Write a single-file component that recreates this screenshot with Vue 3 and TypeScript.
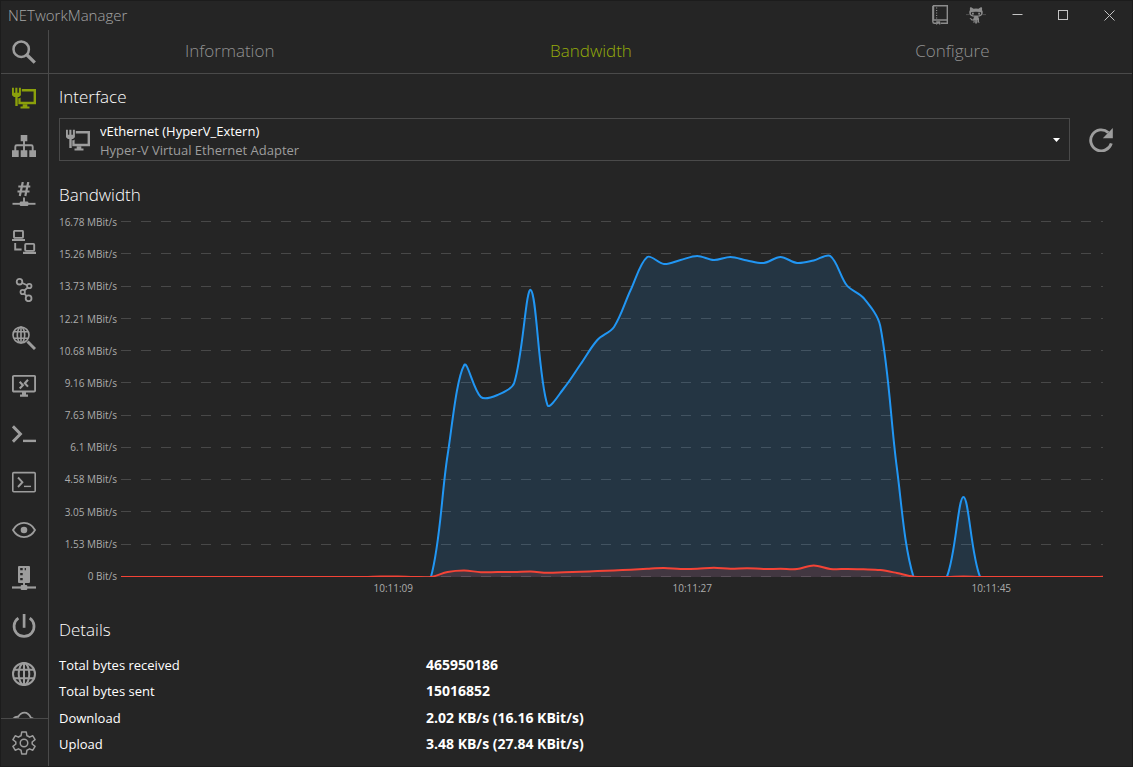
<script setup lang="ts">
import { ref } from 'vue'

interface NavItem {
  id: string
  label: string
}

const navItems: NavItem[] = [
  { id: 'interface', label: 'Network Interface' },
  { id: 'ipscan', label: 'IP Scanner' },
  { id: 'portscan', label: 'Port Scanner' },
  { id: 'ping', label: 'Ping Monitor' },
  { id: 'trace', label: 'Traceroute' },
  { id: 'dns', label: 'DNS Lookup' },
  { id: 'rdp', label: 'Remote Desktop' },
  { id: 'powershell', label: 'PowerShell' },
  { id: 'putty', label: 'PuTTY' },
  { id: 'vnc', label: 'TigerVNC' },
  { id: 'snmp', label: 'SNMP' },
  { id: 'wol', label: 'Wake on LAN' },
  { id: 'whois', label: 'Whois' },
  { id: 'http', label: 'HTTP Headers' },
]
const activeNav = ref('interface')

const tabs = ['Information', 'Bandwidth', 'Configure']
const activeTab = ref('Bandwidth')

const yLabels = [
  '16.78 MBit/s', '15.26 MBit/s', '13.73 MBit/s', '12.21 MBit/s', '10.68 MBit/s', '9.16 MBit/s',
  '7.63 MBit/s', '6.1 MBit/s', '4.58 MBit/s', '3.05 MBit/s', '1.53 MBit/s', '0 Bit/s',
]
const xLabels = ['10:11:09', '10:11:27', '10:11:45']

const details = [
  { label: 'Total bytes received', value: '465950186' },
  { label: 'Total bytes sent', value: '15016852' },
  { label: 'Download', value: '2.02 KB/s (16.16 KBit/s)' },
  { label: 'Upload', value: '3.48 KB/s (27.84 KBit/s)' },
]

const plotWidth = 982
const plotHeight = 356
const sampleStep = 16.64
const firstSampleX = -6.2

const idle = (count: number, level: number): number[] => Array.from({ length: count }, () => level)

const download = [
  ...idle(20, 0),
  122, 212, 180, 182, 194, 287, 172, 189, 213, 237, 250, 287, 320, 313, 317, 321, 317, 320, 316.5,
  314, 320, 314, 316.5, 321, 291.5, 279, 251, 109, 0, 0, 0, 80, 0,
  ...idle(8, 0),
]
const upload = [
  ...idle(16, 0), 0.5, 0.5, 0.1, 0.1,
  5, 6.5, 4.8, 5, 4.9, 5.4, 4.3, 4.8, 5.3, 5.9, 6.5, 7.3, 8.3, 9, 8, 8.2, 9.2, 8.2, 8.8, 8,
  8.2, 8, 11.5, 8.1, 8, 7.7, 7, 4, 0.3, 0, 0, 0.6, 0.1,
  ...idle(7, 0), 0.8,
]

type Point = [number, number]

// Joins the samples with Bezier segments whose handles follow the neighbouring segment lengths.
function smoothPath(levels: number[]): string {
  const pts: Point[] = levels.map((v, i) => [firstSampleX + i * sampleStep, plotHeight - v])
  const smoothness = 0.65
  let d = `M${pts[0][0]} ${pts[0][1]}`
  for (let i = 0; i < pts.length - 1; i++) {
    const p0 = pts[Math.max(i - 1, 0)]
    const p1 = pts[i]
    const p2 = pts[i + 1]
    const p3 = pts[Math.min(i + 2, pts.length - 1)]
    const mid = (a: Point, b: Point): Point => [(a[0] + b[0]) / 2, (a[1] + b[1]) / 2]
    const len = (a: Point, b: Point): number => Math.hypot(b[0] - a[0], b[1] - a[1])
    const c1 = mid(p0, p1)
    const c2 = mid(p1, p2)
    const c3 = mid(p2, p3)
    const k1 = len(p0, p1) / (len(p0, p1) + len(p1, p2))
    const k2 = len(p1, p2) / (len(p1, p2) + len(p2, p3))
    const handle = (axis: 0 | 1): [number, number] => {
      const m1 = c1[axis] + (c2[axis] - c1[axis]) * k1
      const m2 = c2[axis] + (c3[axis] - c2[axis]) * k2
      return [
        (c2[axis] - m1) * smoothness + p1[axis],
        (c2[axis] - m2) * smoothness + p2[axis],
      ]
    }
    const [x1, x2] = handle(0)
    const [y1, y2] = handle(1)
    d += ` C${x1.toFixed(2)} ${y1.toFixed(2)} ${x2.toFixed(2)} ${y2.toFixed(2)} ${p2[0].toFixed(2)} ${p2[1]}`
  }
  return d
}

const closeArea = (line: string, count: number): string =>
  `${line} L${firstSampleX + (count - 1) * sampleStep} ${plotHeight} L${firstSampleX} ${plotHeight} Z`

const downloadLine = smoothPath(download)
const uploadLine = smoothPath(upload)
const downloadArea = closeArea(downloadLine, download.length)
const uploadArea = closeArea(uploadLine, upload.length)
const gridLines = yLabels.map((_, i) => 0.5 + (i * (plotHeight - 1)) / (yLabels.length - 1))
</script>

<template>
  <div class="window">
    <header class="titlebar">
      <h1 class="app-title">NETworkManager</h1>
      <button class="title-tool" type="button" aria-label="Documentation">
        <svg width="16" height="20" viewBox="0 0 16 20">
          <path d="M1.500 .7H15.300V15H1.500zM.8 1V16.500Q.8 18.300 2.500 18.300H4.500M8.500 18.300H15.300V15" fill="none" stroke="currentColor" stroke-width="1.400" />
          <path d="M4 3h1.200M4 5.500h1.200M4 8h1.200M4 10.500h1.200M4 13h1.200" stroke="currentColor" stroke-width="1.200" />
          <path d="M4.200 16.200h4v3.700l-2-1.300-2 1.300z" fill="currentColor" />
        </svg>
      </button>
      <button class="title-tool" type="button" aria-label="GitHub">
        <svg width="20" height="17" viewBox="0 0 20 17">
          <path fill-rule="evenodd" d="M4.200 .3C5.500 .3 6.600 1 7.500 1.700Q10 1.200 12.500 1.700C13.400 1 14.500 .3 15.800 .3Q16.400 1.700 16 3Q17 4.300 16.700 6.200C16.400 8.600 14.500 9.500 11.700 9.700Q13 10.300 13 11.600V14.400Q13 15.200 14 15.700L11.400 15.600V13H10.900V16.600H9.200V13H8.700V15.600L6.800 15.700Q7.600 15.200 7.600 14.400V13.500C5.600 13.900 5 13 4.600 12.200Q4.200 11.400 3.400 11.100C4.500 10.700 5.300 11.300 5.800 12Q6.500 12.700 7.300 12.300Q7.300 10.300 8.500 9.700C5.500 9.500 3.600 8.600 3.300 6.200Q3 4.300 4 3Q3.600 1.700 4.200 .3zM5.800 5Q4.700 5.200 4.800 6.600Q5 8.300 7.500 8.500H12.500Q15 8.300 15.200 6.600Q15.300 5.200 14.200 5Q10 4.600 5.800 5z" fill="currentColor" />
          <rect x="6" y="5.600" width="1.800" height="2.200" rx=".8" fill="currentColor" />
          <rect x="12.200" y="5.600" width="1.800" height="2.200" rx=".8" fill="currentColor" />
          <path d="M0 7.600H3.500M16.500 7.600H20" stroke="currentColor" stroke-width=".4" />
        </svg>
      </button>
      <button class="window-button" type="button" aria-label="Minimize">
        <svg width="11" height="11" viewBox="0 0 11 11"><path d="M.5 4.500h10" stroke="currentColor" /></svg>
      </button>
      <button class="window-button" type="button" aria-label="Maximize">
        <svg width="11" height="11" viewBox="0 0 11 11"><rect x=".5" y=".5" width="9" height="9" fill="none" stroke="currentColor" /></svg>
      </button>
      <button class="window-button" type="button" aria-label="Close">
        <svg width="11" height="11" viewBox="0 0 11 11"><path d="M.5 .5l10 10M10.500 .5l-10 10" stroke="currentColor" /></svg>
      </button>
    </header>

    <div class="topbar">
      <button class="search" type="button" aria-label="Search">
        <svg class="icon" viewBox="0 0 24 24">
          <circle cx="9.200" cy="9.200" r="7.700" fill="none" stroke="currentColor" stroke-width="2.500" />
          <path d="M15 15l7.800 7.600" stroke="currentColor" stroke-width="3.300" />
        </svg>
      </button>
      <nav class="tabs" aria-label="Views">
        <button
          v-for="tab in tabs"
          :key="tab"
          type="button"
          class="tab"
          :class="{ active: tab === activeTab }"
          @click="activeTab = tab"
        >{{ tab }}</button>
      </nav>
    </div>

    <div class="body">
      <aside class="sidebar">
        <nav class="nav" aria-label="Tools">
          <button
            v-for="item in navItems"
            :key="item.id"
            type="button"
            class="nav-item"
            :class="{ active: item.id === activeNav }"
            :aria-label="item.label"
            @click="activeNav = item.id"
          >
            <svg class="icon" viewBox="0 0 24 24" fill="none" stroke="currentColor">
              <g v-if="item.id === 'interface'" fill="currentColor" stroke="none">
                <path d="M0 1.700h1.900v5h1.400v-5h2.100v5h1.500v-5h2v7.500L7 11H5.700v9H3.300v-9H2L0 9.200z" />
                <path d="M9.800 3H24v15.200H6.300V12.300h1.300l1-.8v4.200h13V5.400H9.800z" />
                <path d="M10.700 18.200h4.600v2.200h2.200v2.200H8.500v-2.200h2.200z" />
              </g>
              <g v-else-if="item.id === 'ipscan'">
                <path d="M8.700 1h6.600v6.300H8.700zM0 16.300h6.700V23H0zM8.700 16.300h6.600V23H8.700zM17.300 16.300H24V23h-6.700z" fill="currentColor" stroke="none" />
                <path d="M12 7v10M3.300 17v-4.200q0-1.500 1.500-1.500h14.400q1.500 0 1.500 1.500V17" stroke-width="1.900" />
              </g>
              <g v-else-if="item.id === 'portscan'">
                <path d="M10.800 0L7.800 14M16.300 0l-3 14M6.300 4.500h12M5.500 9.500h12" stroke-width="2.200" />
                <path d="M.5 21.800h23" stroke-width="1.900" />
                <path d="M12 15.500v5" stroke-width="1.900" />
                <rect x="7.700" y="19.600" width="8.700" height="4.400" rx="1.200" fill="currentColor" stroke="none" />
              </g>
              <g v-else-if="item.id === 'ping'">
                <rect x="2" y=".9" width="9" height="7" rx=".8" stroke-width="1.900" />
                <path d="M0 10h13M11 22.800h13" stroke-width="2.200" />
                <rect x="13.200" y="13.900" width="9" height="7" rx=".8" stroke-width="1.900" />
                <path d="M3.200 13v6.500h6.400" stroke-width="1.900" />
              </g>
              <g v-else-if="item.id === 'trace'" stroke-width="1.800">
                <circle cx="7.500" cy="3.700" r="2.800" />
                <circle cx="17.300" cy="8" r="2.200" />
                <circle cx="10.700" cy="14" r="2.200" />
                <circle cx="16.600" cy="20.300" r="2.900" />
                <path d="M10.200 5l5 2.200M15.700 9.600l-3.400 2.900M12.300 15.700l2.300 2.400" />
              </g>
              <g v-else-if="item.id === 'dns'" stroke-width="1.600">
                <circle cx="9" cy="9" r="8" />
                <ellipse cx="9" cy="9" rx="3.700" ry="8" />
                <path d="M9 1v16M1.800 5.700h14.400M1.800 12.300h14.400" />
                <path d="M15.500 15.500l7.500 7.500" stroke-width="3" />
              </g>
              <g v-else-if="item.id === 'rdp'">
                <rect x=".9" y="1.900" width="22.200" height="15.600" rx="1" stroke-width="1.900" />
                <path d="M10 18h4v2.500h2v2.200H8v-2.200h2z" fill="currentColor" stroke="none" />
                <path d="M7.700 7.700l3.200 3.500-3.200 3.300M16 5.800L12.800 9.200l3.200 3.400" stroke-width="2.100" />
              </g>
              <g v-else-if="item.id === 'powershell'">
                <path d="M.9 4.300L8.400 12 .9 19.700" stroke-width="3" />
                <path d="M11 18.900h13" stroke-width="2.400" />
              </g>
              <g v-else-if="item.id === 'putty'">
                <rect x=".8" y="2.600" width="22.400" height="19.200" rx="1" stroke-width="1.600" />
                <path d="M6 7.500l4.400 4.700L6 17" stroke-width="1.900" />
                <path d="M12 16.400h7" stroke-width="1.400" />
              </g>
              <g v-else-if="item.id === 'vnc'">
                <path d="M1 12C3.500 7.500 7.500 4.900 12 4.900S20.500 7.500 23 12C20.500 16.500 16.500 19.100 12 19.100S3.500 16.500 1 12z" stroke-width="1.800" />
                <circle cx="12" cy="12" r="3.300" fill="currentColor" stroke="none" />
              </g>
              <g v-else-if="item.id === 'snmp'">
                <path fill-rule="evenodd" d="M7 0h10q1 0 1 1v15q0 1-1 1H7q-1 0-1-1V1q0-1 1-1zM8.200 2v2.200h2.500V2zM12.700 2v2.200h1.200V2zM8.200 7v2.200h2.500V7zM8.200 12v2.200h2.500V12z" fill="currentColor" stroke="none" />
                <path d="M12 17v3" stroke-width="1.900" />
                <path d="M0 21.500h24" stroke-width="2.200" />
                <rect x="8.700" y="19" width="6.600" height="5" rx="1" fill="currentColor" stroke="none" />
              </g>
              <g v-else-if="item.id === 'wol'" stroke-width="2.700">
                <path d="M12.100 0v13.800" />
                <path d="M6.400 4.200a10 10 0 1 0 11.300 0" />
              </g>
              <g v-else-if="item.id === 'whois'" stroke-width="2">
                <circle cx="12" cy="12" r="11" />
                <ellipse cx="12" cy="12" rx="5.300" ry="11" />
                <path d="M12 1v22M1.900 7.800h20.200M1.900 16.200h20.200" />
              </g>
              <g v-else stroke-width="1.800">
                <path d="M1 9q2-2.500 5.200-2.200Q8.500 2.600 12.500 2.600T19 8q4 .5 4 5t-4.500 4.500h-13Q1 17.500 1 13.500V9" />
              </g>
            </svg>
          </button>
        </nav>
        <button class="settings" type="button" aria-label="Settings">
          <svg class="icon" viewBox="1.500 1.500 21 21" fill="none" stroke="currentColor" stroke-width="1.300">
            <path d="M10 21.600L9.400 18.300Q8.300 17.900 7.200 17.100L4.300 18.300L2.300 14.900L4.900 12.900Q4.700 12 4.900 11.100L2.300 9.100L4.300 5.700L7.200 6.900Q8.300 6.100 9.400 5.700L10 2.400H14L14.600 5.700Q15.700 6.100 16.800 6.900L19.700 5.700L21.700 9.100L19.100 11.100Q19.300 12 19.100 12.900L21.700 14.900L19.700 18.300L16.800 17.100Q15.700 17.900 14.600 18.300L14 21.600z" stroke-linejoin="round" />
            <circle cx="12" cy="12" r="3.300" />
          </svg>
        </button>
      </aside>

      <main class="content">
        <h2 class="heading"><label for="adapter">Interface</label></h2>
        <div class="adapter-row">
          <div class="adapter">
            <select id="adapter" class="adapter-select">
              <option>vEthernet (HyperV_Extern)</option>
            </select>
            <svg class="icon adapter-icon" viewBox="0 0 24 24" fill="currentColor">
              <path d="M0 1.700h1.900v5h1.400v-5h2.100v5h1.500v-5h2v7.500L7 11H5.700v9H3.300v-9H2L0 9.200z" />
              <path d="M9.800 3H24v15.200H6.300V12.300h1.300l1-.8v4.200h13V5.400H9.800z" />
              <path d="M10.700 18.200h4.600v2.200h2.200v2.200H8.500v-2.200h2.200z" />
            </svg>
            <span class="adapter-description">Hyper-V Virtual Ethernet Adapter</span>
            <svg class="adapter-arrow" width="7" height="4" viewBox="0 0 7 4"><path d="M0 0h7L3.500 4z" fill="currentColor" /></svg>
          </div>
          <button class="refresh" type="button" aria-label="Refresh">
            <svg class="icon" viewBox="0 0 24 24">
              <path d="M22.300 15.300A10.500 10.500 0 1 1 19.300 4.600" fill="none" stroke="currentColor" stroke-width="2.900" />
              <path d="M23.800 0V10.300H13.800z" fill="currentColor" />
            </svg>
          </button>
        </div>

        <h2 class="heading chart-heading">Bandwidth</h2>
        <div class="chart">
          <div class="y-axis">
            <span v-for="label in yLabels" :key="label">{{ label }}</span>
          </div>
          <div class="plot">
            <svg class="plot-svg" :viewBox="`0 0 ${plotWidth} ${plotHeight}`" preserveAspectRatio="none" role="img" aria-label="Bandwidth over time">
              <line v-for="y in gridLines" :key="y" class="grid-line" x1="0" :x2="plotWidth" :y1="y" :y2="y" />
              <path class="area download" :d="downloadArea" />
              <path class="line download" :d="downloadLine" />
              <path class="area upload" :d="uploadArea" />
              <path class="line upload" :d="uploadLine" />
            </svg>
          </div>
          <div class="x-axis">
            <span v-for="label in xLabels" :key="label">{{ label }}</span>
          </div>
        </div>

        <h2 class="heading details-heading">Details</h2>
        <table class="details">
          <tbody>
            <tr v-for="row in details" :key="row.label">
              <th scope="row">{{ row.label }}</th>
              <td>{{ row.value }}</td>
            </tr>
          </tbody>
        </table>
      </main>
    </div>
  </div>
</template>

<style>
body {
  margin: 0;
  background: #252525;
}
</style>

<style scoped>
.window {
  --line: #4a4a4a;
  --muted: #9d9d9d;
  --accent: #8ba00b;
  display: flex;
  flex-direction: column;
  box-sizing: border-box;
  height: 100vh;
  min-height: 640px;
  background: #252525;
  color: #fff;
  outline: 1px solid #1c1c1c;
  outline-offset: -1px;
  font-family: "Open Sans", "Noto Sans", sans-serif;
  font-size: 13px;
}

button {
  display: flex;
  align-items: center;
  justify-content: center;
  margin: 0;
  padding: 0;
  border: 0;
  background: none;
  color: var(--muted);
  font: inherit;
}

.icon {
  display: block;
  width: 24px;
  height: 24px;
}

.titlebar {
  display: flex;
  height: 30px;
  padding: 0 1px 0 8px;
}

.app-title {
  flex: 1;
  margin: 0;
  color: #a6a6a6;
  font-size: 15px;
  font-weight: 300;
  line-height: 30px;
}

.title-tool {
  width: 36px;
  color: #8c8c8c;
}

.window-button {
  width: 46px;
  color: #c4c4c4;
}

.topbar {
  display: flex;
  height: 43px;
  border-bottom: 1px solid var(--line);
}

.search {
  width: 48px;
  border-right: 1px solid var(--line);
  box-sizing: content-box;
}

.tabs {
  display: grid;
  flex: 1;
  grid-template-columns: repeat(3, 1fr);
}

.tab {
  padding-bottom: 2px;
  color: #929292;
  font-size: 17px;
  font-weight: 300;
}

.tab.active {
  color: #95ac0a;
}

.body {
  display: flex;
  flex: 1;
  min-height: 0;
}

.sidebar {
  display: flex;
  flex-direction: column;
  width: 48px;
  border-right: 1px solid var(--line);
}

.nav {
  flex: 1;
  min-height: 0;
  overflow: hidden;
}

.nav-item {
  width: 48px;
  height: 48px;
}

.nav-item.active {
  color: var(--accent);
}

.settings {
  height: 48px;
  border-top: 1px solid var(--line);
  box-sizing: content-box;
}

.content {
  display: flex;
  flex: 1;
  flex-direction: column;
  min-width: 0;
  padding: 11px 20px 10px 10px;
}

.heading {
  margin: 0;
  font-size: 17px;
  font-weight: 300;
  line-height: 24px;
}

.adapter-row {
  display: flex;
  align-items: center;
  gap: 19px;
  margin-top: 9px;
}

.adapter {
  display: grid;
  flex: 1;
  grid-template-columns: 40px 1fr 16px;
  grid-template-rows: 21px 20px;
  align-items: center;
  border: 1px solid var(--line);
}

.adapter-select {
  grid-area: 1 / 1 / 3 / 4;
  align-self: stretch;
  width: 100%;
  margin: 0;
  padding: 0 24px 18px 40px;
  border: 0;
  background: none;
  color: #fff;
  font-family: inherit;
  font-size: 13px;
  font-weight: 500;
  line-height: 22px;
  appearance: none;
}

.adapter-icon {
  grid-area: 1 / 1 / 3 / 2;
  margin-left: 6px;
  color: var(--muted);
  pointer-events: none;
}

.adapter-description {
  grid-area: 2 / 2;
  color: var(--muted);
  line-height: 18px;
  pointer-events: none;
}

.adapter-arrow {
  grid-area: 1 / 3 / 3 / 4;
  pointer-events: none;
}

.refresh {
  width: 24px;
  height: 24px;
}

.chart-heading {
  margin-top: 22px;
}

.chart {
  display: grid;
  flex: 1;
  grid-template-columns: 58px 1fr;
  grid-template-rows: 1fr 12px;
  column-gap: 4px;
  min-height: 0;
  margin-top: 9px;
  padding-right: 10px;
  color: #acacac;
  font-size: 10px;
  line-height: 12px;
}

.y-axis {
  display: flex;
  flex-direction: column;
  align-items: flex-end;
  justify-content: space-between;
  white-space: nowrap;
}

.plot {
  display: flex;
  min-height: 0;
  padding: 5px 0;
}

.plot-svg {
  flex: 1;
  width: 100%;
  min-width: 0;
  height: 100%;
  overflow: hidden;
}

.grid-line {
  stroke: #484848;
  stroke-dasharray: 10 10;
  shape-rendering: crispEdges;
  vector-effect: non-scaling-stroke;
}

.line {
  fill: none;
  stroke-width: 2px;
  vector-effect: non-scaling-stroke;
}

.line.download {
  stroke: #2196f3;
}

.line.upload {
  stroke: #f44336;
}

.area.download {
  fill: rgb(33 150 243 / 15%);
}

.area.upload {
  fill: rgb(244 67 54 / 15%);
}

.x-axis {
  display: flex;
  grid-column: 2;
  padding-left: 12.5%;
}

.x-axis span {
  flex: 0 0 34.8%;
  text-align: center;
}

.details-heading {
  margin-top: 24px;
}

.details {
  width: 100%;
  height: 105px;
  margin-top: 10px;
  border-collapse: collapse;
  table-layout: fixed;
}

.details th,
.details td {
  padding: 0;
  font-weight: 400;
  line-height: 18px;
  text-align: left;
}

.details th {
  width: 367px;
}

.details td {
  font-size: 14px;
  font-weight: 700;
}
</style>
